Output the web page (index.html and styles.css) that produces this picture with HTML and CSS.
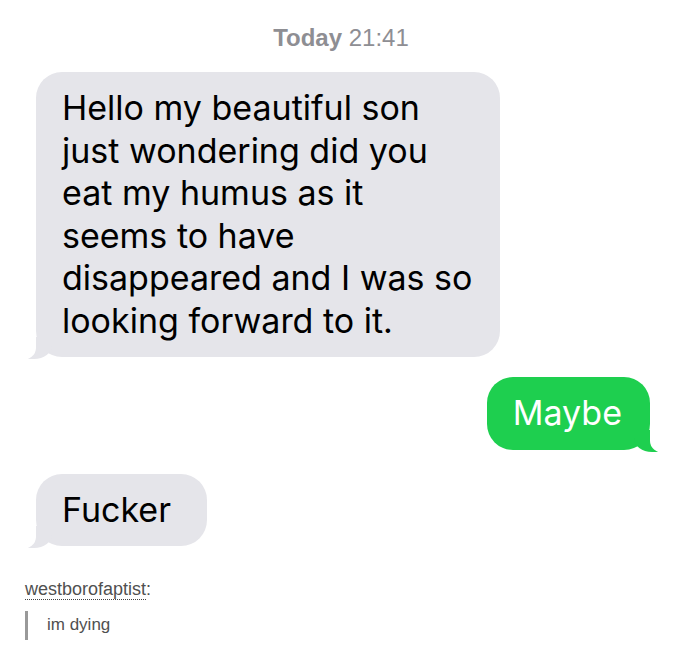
FILE: index.html
```html
<!DOCTYPE html>
<html>
<head>
<meta charset="utf-8">
<link rel="stylesheet" href="styles.css">
</head>
<body>
<div class="chat">
  <div class="stamp"><b>Today</b> 21:41</div>
  <div class="bubble in big">Hello my beautiful son<br>just wondering did you<br>eat my humus as it<br>seems to have<br>disappeared and I was so<br>looking forward to it.</div>
  <div class="row-out"><div class="bubble out">Maybe</div></div>
  <div class="bubble in small">Fucker</div>
</div>
<div class="post">
  <div class="author"><span class="name">westborofaptist</span>:</div>
  <blockquote class="quote">im dying</blockquote>
</div>
</body>
</html>
```

FILE: styles.css
```css
html, body {
  margin: 0;
  padding: 0;
  background: #ffffff;
}
body {
  width: 675px;
  height: 668px;
  overflow: hidden;
  font-family: "Liberation Sans", Arial, sans-serif;
}
.chat {
  padding: 23px 25px 0 36px;
  display: flex;
  flex-direction: column;
  align-items: flex-start;
}
.stamp {
  align-self: center;
  margin-left: -4px;
  font-size: 24px;
  line-height: 30px;
  color: #8e8e93;
  height: 30px;
}
.stamp b {
  font-weight: bold;
}
.bubble {
  position: relative;
  font-family: Inter, "Liberation Sans", sans-serif;
  font-size: 34px;
  line-height: 42.5px;
  border-radius: 26px;
  box-sizing: border-box;
}
.bubble.in {
  background: #e5e5ea;
  color: #000;
  padding: 15px 26px;
}
.bubble.big {
  margin-top: 19px;
  width: 464px;
}
.bubble.small {
  margin-top: 24px;
  padding-right: 36px;
}
.bubble.in::before {
  content: "";
  position: absolute;
  left: -8px;
  bottom: -2px;
  width: 24px;
  height: 22px;
  background: #e5e5ea;
  border-bottom-right-radius: 18px 14px;
}
.bubble.in::after {
  content: "";
  position: absolute;
  left: -14px;
  bottom: -3px;
  width: 14px;
  height: 24px;
  background: #ffffff;
  border-bottom-right-radius: 14px 12px;
}
.row-out {
  align-self: stretch;
  display: flex;
  justify-content: flex-end;
  margin-top: 20px;
}
.bubble.out {
  background: #1ecf4f;
  color: #fff;
  padding: 15px 28px 15px 26px;
}
.bubble.out::before {
  content: "";
  position: absolute;
  right: -8px;
  bottom: -2px;
  width: 24px;
  height: 22px;
  background: #1ecf4f;
  border-bottom-left-radius: 18px 14px;
}
.bubble.out::after {
  content: "";
  position: absolute;
  right: -14px;
  bottom: -3px;
  width: 14px;
  height: 24px;
  background: #ffffff;
  border-bottom-left-radius: 14px 12px;
}
.post {
  padding: 33px 0 0 25px;
  font-size: 18px;
  color: #505050;
}
.author {
  line-height: 20px;
}
.name {
  border-bottom: 1px dotted #444;
}
.quote {
  margin: 12px 0 0 0;
  padding: 3px 0 5px 19px;
  border-left: 3px solid #999;
  font-size: 17px;
  line-height: 21px;
}
```
